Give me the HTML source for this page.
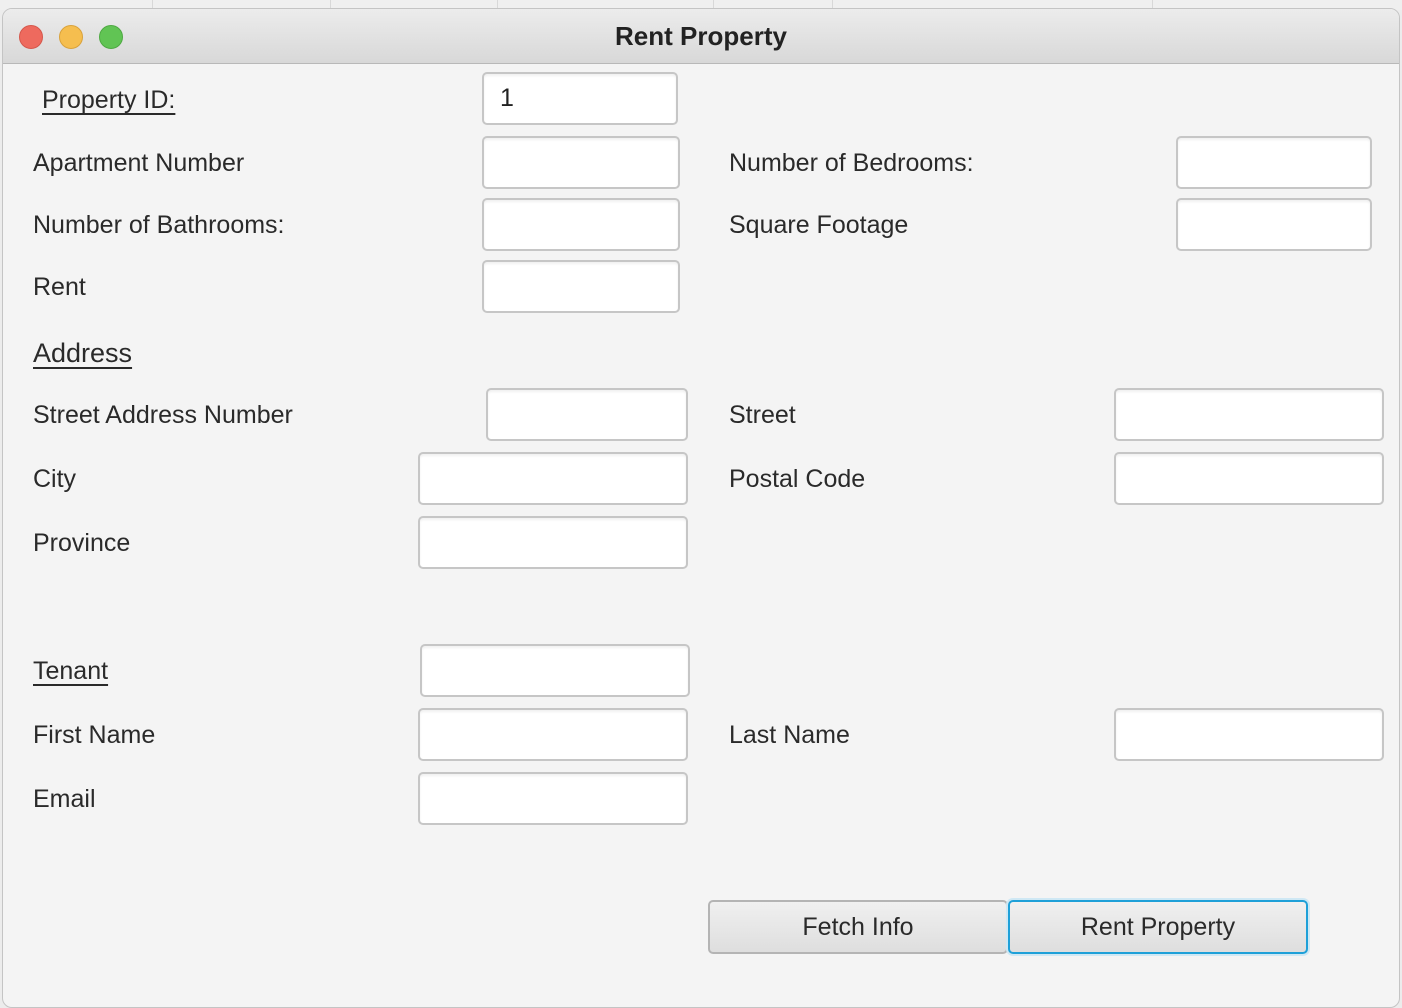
<!DOCTYPE html>
<html><head><meta charset="utf-8"><style>
*{margin:0;padding:0;box-sizing:border-box}
html,body{width:1402px;height:964px;overflow:hidden;background:#ececec;font-family:"Liberation Sans",sans-serif}
.bg{position:absolute;left:0;top:0;width:1402px;height:10px;background:#efefef}
.bg i{position:absolute;top:0;width:1px;height:10px;background:#d8d8d8}
.win{position:absolute;left:2px;top:8px;width:1398px;height:1000px;background:#f4f4f4;border-radius:10px;border:1px solid #c4c4c4;overflow:hidden}
.tb{position:absolute;left:0;top:0;right:0;height:55px;background:linear-gradient(#ececec,#d8d8d8);border-bottom:1px solid #b8b8b8}
.dot{position:absolute;top:16px;width:24px;height:24px;border-radius:50%}
.title{position:absolute;left:0;right:0;top:12px;text-align:center;font-weight:bold;font-size:26px;color:#222}
.l{position:absolute;font-size:25px;color:#2a2a2a;white-space:nowrap}
.u{text-decoration:underline;text-underline-offset:5px;text-decoration-thickness:2px}
.f{position:absolute;height:53px;background:#fff;border:2px solid #c6c6c6;border-radius:5px;box-shadow:inset 0 2px 2px rgba(0,0,0,.06);font-size:25px;padding:10px 16px;color:#222}
.b{position:absolute;top:900px;height:54px;border-radius:5px;background:linear-gradient(#f0f0f0,#dedede);font-size:25px;color:#2a2a2a;text-align:center;line-height:50px}
</style></head><body>
<div class="bg"><i style="left:152px"></i><i style="left:330px"></i><i style="left:497px"></i><i style="left:713px"></i><i style="left:832px"></i><i style="left:1152px"></i></div>
<div class="win">
<div class="tb">
<div class="dot" style="left:16px;background:#ee6a5e;border:1px solid #d5574b"></div>
<div class="dot" style="left:56px;background:#f5be4f;border:1px solid #d9a23b"></div>
<div class="dot" style="left:96px;background:#61c454;border:1px solid #4ea942"></div>
<div class="title">Rent Property</div>
</div>
</div>
<div class="l u" style="left:42px;top:86px">Property ID:</div>
<div class="f" style="left:482px;top:72px;width:196px">1</div>
<div class="l" style="left:33px;top:149px">Apartment Number</div>
<div class="f" style="left:482px;top:136px;width:198px"></div>
<div class="l" style="left:729px;top:149px">Number of Bedrooms:</div>
<div class="f" style="left:1176px;top:136px;width:196px"></div>
<div class="l" style="left:33px;top:211px">Number of Bathrooms:</div>
<div class="f" style="left:482px;top:198px;width:198px"></div>
<div class="l" style="left:729px;top:211px">Square Footage</div>
<div class="f" style="left:1176px;top:198px;width:196px"></div>
<div class="l" style="left:33px;top:273px">Rent</div>
<div class="f" style="left:482px;top:260px;width:198px"></div>
<div class="l u" style="left:33px;top:338px;font-size:27px">Address</div>
<div class="l" style="left:33px;top:401px">Street Address Number</div>
<div class="f" style="left:486px;top:388px;width:202px"></div>
<div class="l" style="left:729px;top:401px">Street</div>
<div class="f" style="left:1114px;top:388px;width:270px"></div>
<div class="l" style="left:33px;top:465px">City</div>
<div class="f" style="left:418px;top:452px;width:270px"></div>
<div class="l" style="left:729px;top:465px">Postal Code</div>
<div class="f" style="left:1114px;top:452px;width:270px"></div>
<div class="l" style="left:33px;top:529px">Province</div>
<div class="f" style="left:418px;top:516px;width:270px"></div>
<div class="l u" style="left:33px;top:657px">Tenant</div>
<div class="f" style="left:420px;top:644px;width:270px"></div>
<div class="l" style="left:33px;top:721px">First Name</div>
<div class="f" style="left:418px;top:708px;width:270px"></div>
<div class="l" style="left:729px;top:721px">Last Name</div>
<div class="f" style="left:1114px;top:708px;width:270px"></div>
<div class="l" style="left:33px;top:785px">Email</div>
<div class="f" style="left:418px;top:772px;width:270px"></div>
<div class="b" style="left:708px;width:300px;border:2px solid #b4b4b4">Fetch Info</div>
<div class="b" style="left:1008px;width:300px;border:2px solid #1ea0d8;box-shadow:0 0 0 2px #cfe8f4">Rent Property</div>
</body></html>
